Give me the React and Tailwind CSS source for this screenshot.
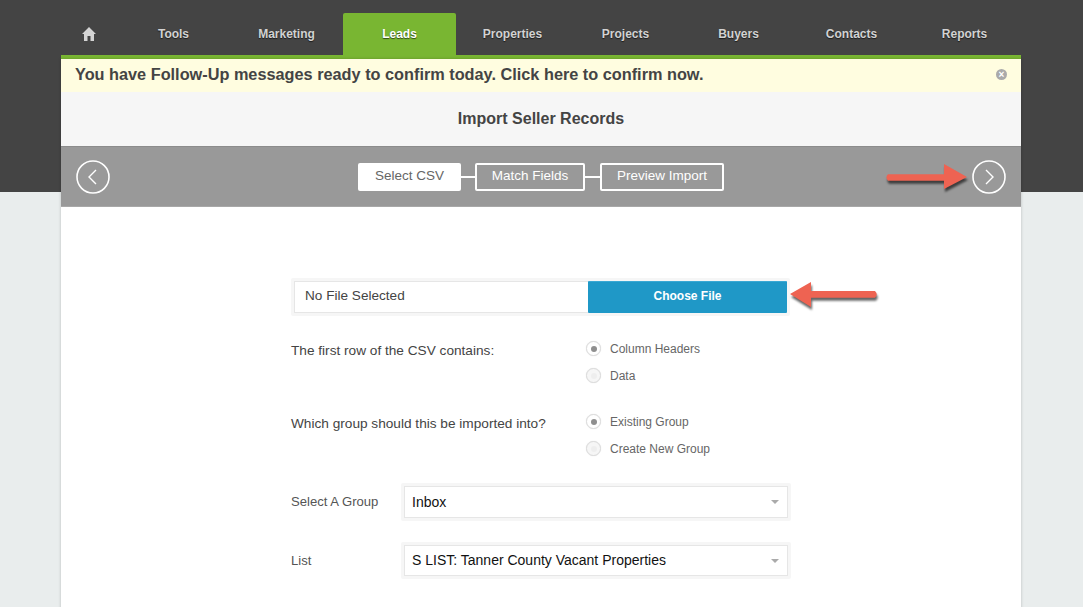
import React from 'react';

const tabs = ['Tools', 'Marketing', 'Leads', 'Properties', 'Projects', 'Buyers', 'Contacts', 'Reports'];

const Radio = ({ label, checked }) => (
  <div className="flex items-center h-[27px] gap-[9px]">
    <span className={`w-[15px] h-[15px] rounded-full border border-[#dcdcdc] flex items-center justify-center shadow-[0_0_1px_#ddd] ${checked ? 'bg-white' : 'bg-[#f6f6f6]'}`}>
      <span className={`w-[6px] h-[6px] rounded-full ${checked ? 'bg-[#8f8f8f]' : 'bg-[#eeeeee]'}`} />
    </span>
    <span className="text-[12px] text-[#666]">{label}</span>
  </div>
);

const RadioRow = ({ label, options, className }) => (
  <div className={`flex ${className}`}>
    <div className="w-[295px] text-[13.65px] leading-[27px] text-[#444] pt-[2px]">{label}</div>
    <div>
      {options.map((o, i) => (
        <Radio key={o} label={o} checked={i === 0} />
      ))}
    </div>
  </div>
);

const SelectRow = ({ label, value, className, boxHeight }) => (
  <div className={`flex items-center ${className}`}>
    <div className="w-[110px] text-[13.1px] text-[#555]">{label}</div>
    <div className={`w-[390px] p-[3px] bg-[#f6f6f6] rounded-[2px] ${boxHeight}`}>
      <div className="h-full bg-white border border-[#e6e6e6] flex items-center justify-between pl-[7px] pr-[8px]">
        <span className="text-[14px] text-[#111]">{value}</span>
        <span className="w-0 h-0 border-x-[4px] border-x-transparent border-t-[4px] border-t-[#aaa]" />
      </div>
    </div>
  </div>
);

const StepCircle = ({ dir }) => (
  <svg width="36" height="36" viewBox="0 0 36 36" fill="none" stroke="white">
    <circle cx="18" cy="18" r="16" strokeWidth="1.6" />
    <path d={dir === 'left' ? 'M21 11 L14 18 L21 25' : 'M15 11 L22 18 L15 25'} strokeWidth="1.4" />
  </svg>
);

export default function App() {
  return (
    <div className="h-[607px] overflow-hidden bg-[linear-gradient(#444444_192px,#e9eded_192px)] font-['Liberation_Sans',Arial,sans-serif]">
      <div className="w-[960px] ml-[61px] pt-[13px]">
        {/* nav */}
        <div className="flex h-[42px]">
          <div className="w-[56px] flex items-center justify-center text-[#d4d4d4]">
            <svg width="14" height="14" viewBox="0 0 14 14" fill="currentColor">
              <path d="M7 0 L14 7 H12 V14 H8.5 V9 H5.5 V14 H2 V7 H0 Z" />
            </svg>
          </div>
          {tabs.map((t) => (
            <div
              key={t}
              className={`w-[113px] flex items-center justify-center text-[12px] font-bold rounded-t-[2px] [text-shadow:0_1px_1px_rgba(0,0,0,0.6)] ${
                t === 'Leads' ? 'bg-[#79b632] text-white' : 'text-[#d2d2d2]'
              }`}
            >
              {t}
            </div>
          ))}
        </div>

        <div className="h-[4px] bg-[#79b632]" />

        {/* card */}
        <div className="bg-white h-[600px] shadow-[0_0_3px_rgba(0,0,0,0.2)]">
          <div className="h-[33px] bg-[#fffde0] flex items-center justify-between pl-[14px] pr-[14px] pb-[2px]">
            <span className="text-[16.3px] font-bold text-[#444]">You have Follow-Up messages ready to confirm today. Click here to confirm now.</span>
            <span className="w-[11px] h-[11px] rounded-full bg-[#aaa] text-white text-[10px] leading-[11px] text-center font-bold">×</span>
          </div>
          <div className="h-[54px] bg-[#f6f6f6] flex items-center justify-center text-[16px] font-bold text-[#444]">
            Import Seller Records
          </div>

          <div className="relative h-[61px] bg-[#999999] border-t border-t-[#8c8c8c] border-b border-b-[#a8a8a8] flex items-center justify-between pl-[14px] pr-[14px]">
            <StepCircle dir="left" />
            <div className="flex items-center text-[13.5px]">
              <div className="w-[103px] h-[28px] bg-white rounded-[2px] flex items-center justify-center pb-px text-[#666]">Select CSV</div>
              <div className="w-[14px] h-[2px] bg-white" />
              <div className="w-[110px] h-[28px] border-2 border-white rounded-[2px] flex items-center justify-center pb-px text-white">Match Fields</div>
              <div className="w-[15px] h-[2px] bg-white" />
              <div className="w-[124px] h-[28px] border-2 border-white rounded-[2px] flex items-center justify-center pb-px text-white">Preview Import</div>
            </div>
            <StepCircle dir="right" />
            {/* annotation arrow */}
            <svg className="absolute left-[819px] top-[8px] drop-shadow-[1px_3px_1px_rgba(0,0,0,0.6)]" width="95" height="45" viewBox="0 0 95 45">
              <path d="M8 19.3 H64 V9 L87 22 L64 34 V25.7 H8 Q4.8 22.5 8 19.3 Z" fill="#ee6352" />
            </svg>
          </div>

          {/* form */}
          <div className="w-[500px] ml-[230px]">
            <div className="relative mt-[71px] h-[38px] w-[499px] p-[3px] bg-[#f6f6f6] rounded-[2px] flex">
              <div className="w-[294px] bg-white border border-[#e6e6e6] border-r-0 flex items-center pl-[10px] pb-[1px] text-[13.6px] text-[#444]">No File Selected</div>
              <div className="w-[199px] bg-[#1f98c7] border-t border-t-[#3aa8d4] flex items-center justify-center pb-[3px] text-[12px] font-bold text-white rounded-[1px]">Choose File</div>
              {/* annotation arrow */}
              <svg className="absolute left-[489px] top-[-3px] drop-shadow-[1px_3px_1px_rgba(0,0,0,0.6)]" width="110" height="40" viewBox="0 0 110 40">
                <path d="M95 16 H31 V7 L10 19 L31 32 V22.7 H95 Q98.5 19.3 95 16 Z" fill="#ee6352" />
              </svg>
            </div>

            <RadioRow className="mt-[19px]" label="The first row of the CSV contains:" options={['Column Headers', 'Data']} />
            <RadioRow className="mt-[19px]" label="Which group should this be imported into?" options={['Existing Group', 'Create New Group']} />

            <SelectRow className="mt-[21px]" boxHeight="h-[38px]" label="Select A Group" value="Inbox" />
            <SelectRow className="mt-[21px]" boxHeight="h-[37px]" label="List" value="S LIST: Tanner County Vacant Properties" />
          </div>
        </div>
      </div>
    </div>
  );
}
